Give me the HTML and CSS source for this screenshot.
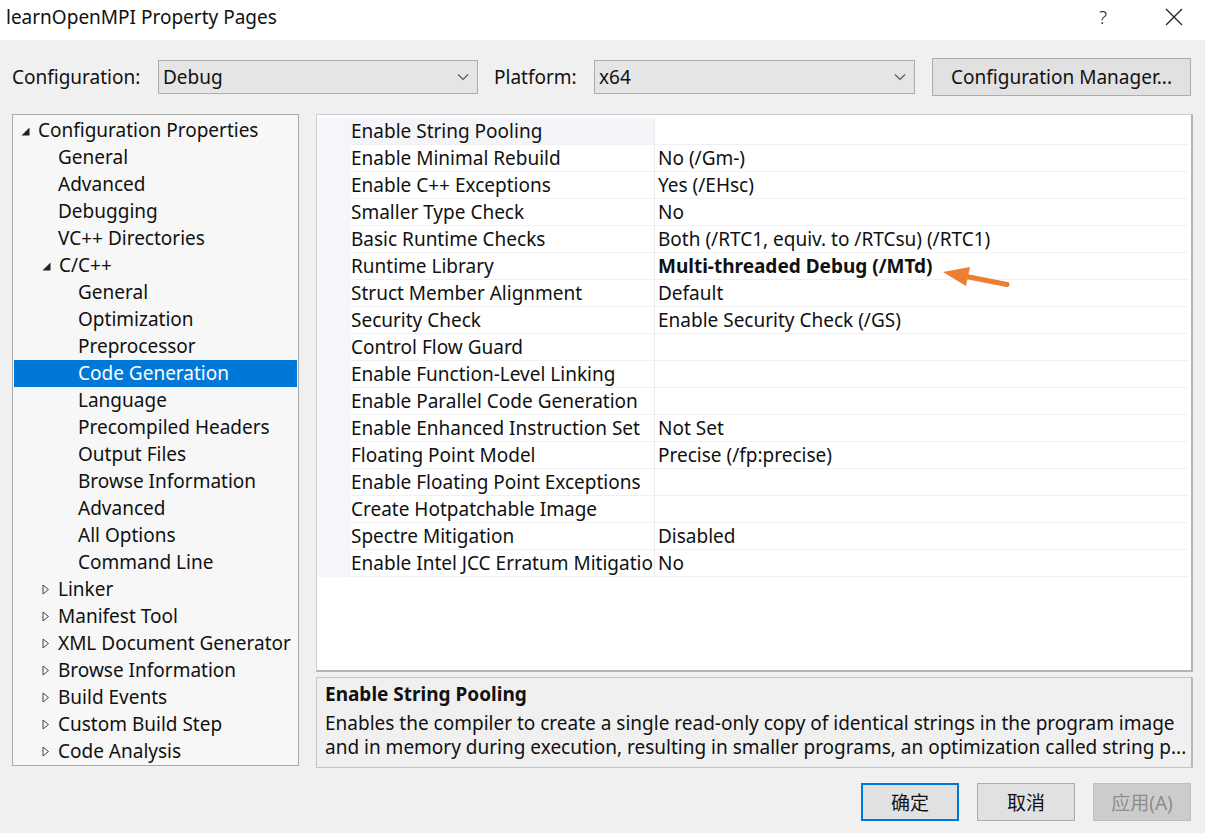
FILE: index.html
```html
<!DOCTYPE html>
<html>
<head>
<meta charset="utf-8">
<link rel="stylesheet" href="styles.css">
</head>
<body>
<div class="dialog">
  <div class="titlebar">
    <div class="title">learnOpenMPI Property Pages</div>
    <div class="tb-icons">
      <span class="help">?</span>
      <svg class="close" width="18" height="18" viewBox="0 0 18 18"><path d="M1 1 L17 17 M17 1 L1 17" stroke="#222" stroke-width="1.3" fill="none"/></svg>
    </div>
  </div>

  <div class="toolbar">
    <label class="lbl lbl-config">Configuration:</label>
    <div class="combo combo-config"><span>Debug</span><svg class="chev" width="12" height="8" viewBox="0 0 12 8"><path d="M1 1.5 L6 6.5 L11 1.5" stroke="#555" stroke-width="1.1" fill="none"/></svg></div>
    <label class="lbl lbl-platform">Platform:</label>
    <div class="combo combo-platform"><span>x64</span><svg class="chev" width="12" height="8" viewBox="0 0 12 8"><path d="M1 1.5 L6 6.5 L11 1.5" stroke="#555" stroke-width="1.1" fill="none"/></svg></div>
    <button class="btn btn-cm">Configuration Manager...</button>
  </div>

  <div class="main">
    <div class="tree">
      <div class="node l0"><svg class="tri tri-open" width="9" height="9" viewBox="0 0 9 9"><path d="M8.5 0.5 L8.5 8.5 L0.5 8.5 Z" fill="#222"/></svg>Configuration Properties</div>
      <div class="node l1">General</div>
      <div class="node l1">Advanced</div>
      <div class="node l1">Debugging</div>
      <div class="node l1">VC++ Directories</div>
      <div class="node l1x"><svg class="tri tri-open" width="9" height="9" viewBox="0 0 9 9"><path d="M8.5 0.5 L8.5 8.5 L0.5 8.5 Z" fill="#222"/></svg>C/C++</div>
      <div class="node l2">General</div>
      <div class="node l2">Optimization</div>
      <div class="node l2">Preprocessor</div>
      <div class="node l2 sel">Code Generation</div>
      <div class="node l2">Language</div>
      <div class="node l2">Precompiled Headers</div>
      <div class="node l2">Output Files</div>
      <div class="node l2">Browse Information</div>
      <div class="node l2">Advanced</div>
      <div class="node l2">All Options</div>
      <div class="node l2">Command Line</div>
      <div class="node l1x"><svg class="tri tri-closed" width="8" height="11" viewBox="0 0 8 11"><path d="M1 1 L6.5 5.5 L1 10 Z" fill="none" stroke="#444" stroke-width="1"/></svg>Linker</div>
      <div class="node l1x"><svg class="tri tri-closed" width="8" height="11" viewBox="0 0 8 11"><path d="M1 1 L6.5 5.5 L1 10 Z" fill="none" stroke="#444" stroke-width="1"/></svg>Manifest Tool</div>
      <div class="node l1x"><svg class="tri tri-closed" width="8" height="11" viewBox="0 0 8 11"><path d="M1 1 L6.5 5.5 L1 10 Z" fill="none" stroke="#444" stroke-width="1"/></svg>XML Document Generator</div>
      <div class="node l1x"><svg class="tri tri-closed" width="8" height="11" viewBox="0 0 8 11"><path d="M1 1 L6.5 5.5 L1 10 Z" fill="none" stroke="#444" stroke-width="1"/></svg>Browse Information</div>
      <div class="node l1x"><svg class="tri tri-closed" width="8" height="11" viewBox="0 0 8 11"><path d="M1 1 L6.5 5.5 L1 10 Z" fill="none" stroke="#444" stroke-width="1"/></svg>Build Events</div>
      <div class="node l1x"><svg class="tri tri-closed" width="8" height="11" viewBox="0 0 8 11"><path d="M1 1 L6.5 5.5 L1 10 Z" fill="none" stroke="#444" stroke-width="1"/></svg>Custom Build Step</div>
      <div class="node l1x"><svg class="tri tri-closed" width="8" height="11" viewBox="0 0 8 11"><path d="M1 1 L6.5 5.5 L1 10 Z" fill="none" stroke="#444" stroke-width="1"/></svg>Code Analysis</div>
    </div>

    <div class="right">
      <div class="grid">
        <div class="row selrow"><div class="gut"></div><div class="name">Enable String Pooling</div><div class="val"></div></div>
        <div class="row"><div class="gut"></div><div class="name">Enable Minimal Rebuild</div><div class="val">No (/Gm-)</div></div>
        <div class="row"><div class="gut"></div><div class="name">Enable C++ Exceptions</div><div class="val">Yes (/EHsc)</div></div>
        <div class="row"><div class="gut"></div><div class="name">Smaller Type Check</div><div class="val">No</div></div>
        <div class="row"><div class="gut"></div><div class="name">Basic Runtime Checks</div><div class="val">Both (/RTC1, equiv. to /RTCsu) (/RTC1)</div></div>
        <div class="row"><div class="gut"></div><div class="name">Runtime Library</div><div class="val bold">Multi-threaded Debug (/MTd)</div></div>
        <div class="row"><div class="gut"></div><div class="name">Struct Member Alignment</div><div class="val">Default</div></div>
        <div class="row"><div class="gut"></div><div class="name">Security Check</div><div class="val">Enable Security Check (/GS)</div></div>
        <div class="row"><div class="gut"></div><div class="name">Control Flow Guard</div><div class="val"></div></div>
        <div class="row"><div class="gut"></div><div class="name">Enable Function-Level Linking</div><div class="val"></div></div>
        <div class="row"><div class="gut"></div><div class="name">Enable Parallel Code Generation</div><div class="val"></div></div>
        <div class="row"><div class="gut"></div><div class="name">Enable Enhanced Instruction Set</div><div class="val">Not Set</div></div>
        <div class="row"><div class="gut"></div><div class="name">Floating Point Model</div><div class="val">Precise (/fp:precise)</div></div>
        <div class="row"><div class="gut"></div><div class="name">Enable Floating Point Exceptions</div><div class="val"></div></div>
        <div class="row"><div class="gut"></div><div class="name">Create Hotpatchable Image</div><div class="val"></div></div>
        <div class="row"><div class="gut"></div><div class="name">Spectre Mitigation</div><div class="val">Disabled</div></div>
        <div class="row"><div class="gut"></div><div class="name">Enable Intel JCC Erratum Mitigation</div><div class="val">No</div></div>
      </div>
      <div class="desc">
        <div class="desc-title">Enable String Pooling</div>
        <div class="desc-line">Enables the compiler to create a single read-only copy of identical strings in the program image</div>
        <div class="desc-line">and in memory during execution, resulting in smaller programs, an optimization called string p...</div>
      </div>
    </div>
  </div>

  <div class="footer">
    <button class="btn btn-ok">确定</button>
    <button class="btn">取消</button>
    <button class="btn btn-dis">应用(A)</button>
  </div>

  <svg class="arrow" width="80" height="40" viewBox="0 0 80 40">
    <path d="M27 18.2 L69 26.5" stroke="#ed7d31" stroke-width="5" stroke-linecap="round" fill="none"/>
    <path d="M5 14 L32 9 L28 28 Z" fill="#ed7d31"/>
  </svg>
</div>
</body>
</html>
```

FILE: styles.css
```css
* { box-sizing: border-box; }
html, body { margin: 0; padding: 0; }
body {
  width: 1205px;
  height: 833px;
  background: #f0f0f0;
  font-family: "Noto Sans", "Noto Sans CJK SC", sans-serif;
  font-size: 19px;
  color: #111;
  overflow: hidden;
}
.dialog { position: relative; width: 1205px; height: 833px; display: flex; flex-direction: column; }

.titlebar {
  height: 40px;
  background: #fff;
  display: flex;
  align-items: center;
  justify-content: space-between;
  padding: 0 22px 0 6px;
}
.title { font-size: 19px; color: #111; margin-top: -6px; }
.tb-icons { display: flex; align-items: center; gap: 58px; margin-top: -6px; }
.help { font-size: 19px; color: #222; font-weight: 300; }

.toolbar {
  height: 74px;
  display: flex;
  align-items: center;
  padding: 0 12px;
}
.lbl { color: #111; }
.lbl-config { width: 146px; }
.lbl-platform { width: 100px; margin-left: 16px; }
.combo {
  height: 34px;
  background: #e5e5e5;
  border: 1px solid #adadad;
  display: flex;
  align-items: center;
  justify-content: space-between;
  padding: 0 8px 0 4px;
}
.combo-config { width: 320px; }
.combo-platform { width: 321px; }
.btn {
  font-family: "Noto Sans", "Noto Sans CJK SC", sans-serif;
  font-size: 19px;
  color: #111;
  background: #e1e1e1;
  border: 1px solid #adadad;
  padding: 0;
}
.btn-cm { width: 259px; height: 38px; margin-left: 17px; }

.main {
  display: flex;
  padding: 0 12px;
  gap: 17px;
  height: 656px;
}
.tree {
  width: 288px;
  height: 652px;
  background: #f7f7f7;
  border: 1px solid #a9a9a9;
  padding: 2px 1px 0 1px;
}
.node {
  height: 27px;
  line-height: 27px;
  white-space: nowrap;
  color: #111;
  display: flex;
  align-items: center;
}
.node .tri { flex: none; }
.tri-open { margin-right: 8px; margin-top: 1px; }
.tri-closed { margin-right: 8px; }
.l0 { padding-left: 7px; }
.l1 { padding-left: 44px; }
.l1x { padding-left: 28px; }
.l2 { padding-left: 64px; }
.sel { background: #0078d7; color: #fff; }

.right { width: 877px; display: flex; flex-direction: column; gap: 5px; }
.grid {
  height: 558px;
  background: #fff;
  border-top: 1px solid #cfcfcf;
  border-left: 1px solid #cfcfcf;
  border-right: 2px solid #b4b4b4;
  border-bottom: 2px solid #b4b4b4;
  padding-top: 3px;
}
.row {
  display: flex;
  height: 27px;
  align-items: stretch;
}
.gut { width: 34px; background: #f4f6fa; flex: none; }
.name {
  width: 304px;
  flex: none;
  padding-left: 0;
  line-height: 26px;
  border-bottom: 1px solid #f0f0f0;
  border-right: 1px solid #ececec;
  white-space: nowrap;
  overflow: hidden;
}
.selrow .name { background: #f3f5f9; }
.val {
  flex: 1;
  padding-left: 3px;
  line-height: 26px;
  border-bottom: 1px solid #f0f0f0;
  white-space: nowrap;
  margin-right: 3px;
}
.bold { font-weight: 700; }

.desc {
  height: 91px;
  background: #f0f0f0;
  border: 1px solid #c4c4c4;
  border-right: 2px solid #b9b9b9;
  padding: 3px 8px;
}
.desc-title { font-weight: 700; line-height: 26px; margin-bottom: 4px; }
.desc-line { line-height: 24px; white-space: nowrap; }

.footer {
  display: flex;
  justify-content: flex-end;
  gap: 18px;
  padding: 13px 14px 0 0;
}
.footer .btn { width: 98px; height: 38px; font-size: 19px; }
.btn-ok { border: 2px solid #0078d7; }
.btn-dis { background: #cccccc; border-color: #bfbfbf; color: #8d8d8d; }

.arrow { position: absolute; left: 938px; top: 258px; }
```
